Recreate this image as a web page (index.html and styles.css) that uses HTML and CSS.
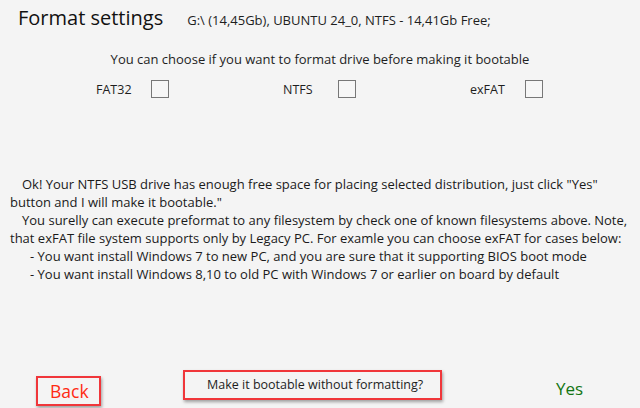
FILE: index.html
```html
<!DOCTYPE html>
<html>
<head>
<meta charset="utf-8">
<link rel="stylesheet" href="styles.css">
</head>
<body>
<div class="page">
  <div class="header">
    <span class="title">Format settings</span>
    <span class="drive">G:\ (14,45Gb), UBUNTU 24_0, NTFS - 14,41Gb Free;</span>
  </div>
  <div class="choose">You can choose if you want to format drive before making it bootable</div>
  <div class="fsrow">
    <div class="fs fs1"><span>FAT32</span><span class="box"></span></div>
    <div class="fs fs2"><span>NTFS</span><span class="box"></span></div>
    <div class="fs fs3"><span>exFAT</span><span class="box"></span></div>
  </div>
  <div class="info">
    <div class="para">Ok! Your NTFS USB drive has enough free space for placing selected distribution, just click "Yes"<br>button and I will make it bootable."</div>
    <div class="para">You surelly can execute preformat to any filesystem by check one of known filesystems above. Note,<br>that exFAT file system supports only by Legacy PC. For examle you can choose exFAT for cases below:</div>
    <div class="item">- You want install Windows 7 to new PC, and you are sure that it supporting BIOS boot mode</div>
    <div class="item">- You want install Windows 8,10 to old PC with Windows 7 or earlier on board by default</div>
  </div>
  <div class="footer">
    <div class="back">Back</div>
    <div class="noformat">Make it bootable without formatting?</div>
    <div class="yes">Yes</div>
  </div>
</div>
</body>
</html>
```
FILE: styles.css
```css
html, body {
  margin: 0;
  padding: 0;
  background: #f4f4f4;
}
body {
  font-family: "Open Sans", "Noto Sans", sans-serif;
  color: #1a1a1a;
}
.page {
  width: 640px;
  height: 408px;
  overflow: hidden;
  display: flex;
  flex-direction: column;
}
.header {
  display: flex;
  align-items: baseline;
  padding: 4px 0 0 18px;
  height: 32px;
}
.title {
  font-size: 20px;
  line-height: 28px;
  color: #111;
}
.drive {
  font-size: 13px;
  margin-left: 24px;
  color: #1e1e1e;
}
.choose {
  font-size: 13px;
  text-align: center;
  line-height: 18px;
  margin-top: 14px;
  color: #1e1e1e;
}
.fsrow {
  display: flex;
  margin-top: 11px;
  height: 20px;
}
.fs {
  display: flex;
  align-items: center;
  font-size: 12.5px;
  color: #1e1e1e;
}
.fs1 { margin-left: 96px; }
.fs2 { margin-left: 114px; }
.fs3 { margin-left: 114px; }
.fs span:first-child { width: 55px; }
.box {
  display: block;
  width: 18px;
  height: 18px;
  border: 1px solid #777;
  box-sizing: border-box;
  background: #f6f6f6;
}
.info {
  margin-top: 76px;
  padding-left: 10px;
  font-size: 13px;
  line-height: 18px;
  color: #1a1a1a;
}
.para {
  text-indent: 12px;
}
.item {
  padding-left: 20px;
}
.footer {
  margin-top: auto;
  display: flex;
  align-items: flex-start;
  height: 38px;
}
.back {
  margin-left: 36px;
  margin-top: 6px;
  width: 65px;
  height: 30px;
  box-sizing: border-box;
  border: 2px solid #f0363a;
  box-shadow: 1px 2px 3px rgba(0,0,0,0.35);
  color: #ff2a12;
  font-size: 17.5px;
  line-height: 26px;
  padding-left: 12px;
}
.noformat {
  margin-left: 82px;
  width: 259px;
  height: 30px;
  box-sizing: border-box;
  border: 2px solid #f0363a;
  box-shadow: 1px 2px 3px rgba(0,0,0,0.35);
  font-size: 12.5px;
  line-height: 26px;
  padding-left: 22px;
  color: #1e1e1e;
}
.yes {
  margin-left: 114px;
  margin-top: 7px;
  color: #127512;
  font-size: 17px;
  line-height: 24px;
}
```
